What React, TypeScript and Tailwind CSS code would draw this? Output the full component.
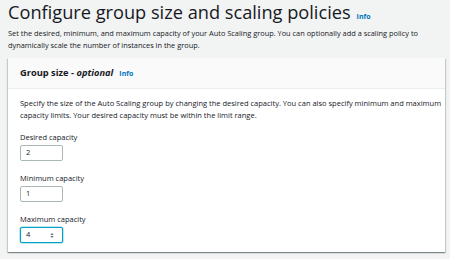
import React from 'react';

const Info = () => (
  <span className="ml-[6px] text-[7px] leading-none font-bold text-[#0073bb]">Info</span>
);

interface FieldProps {
  label: string;
  value: string;
  focused?: boolean;
}

const Field = ({ label, value, focused = false }: FieldProps) => (
  <div className="flex flex-col">
    <label className="text-[7.5px] leading-[10px] text-[#16191f]">{label}</label>
    <div
      className={`mt-[3px] flex h-[16px] w-[43px] items-center justify-between rounded-[2px] bg-white pl-[5px] pr-[8px] text-[7.5px] text-[#16191f] ${focused ? 'border border-[#00a1c9] shadow-[0_0_0_0.5px_rgba(0,161,201,0.5)]' : 'border border-[#aab7b8]'}`}
    >
      <span>{value}</span>
      {focused && (
        <svg width="4" height="7" viewBox="0 0 4 7" className="text-[#687078]">
          <path d="M0.3 3 L2 1 L3.7 3 Z M0.3 4 L2 6 L3.7 4 Z" fill="currentColor" />
        </svg>
      )}
    </div>
  </div>
);

export default function App() {
  return (
    <div
      className="h-[259px] w-[450px] overflow-hidden bg-[#f2f3f3] px-[8px] pt-[2px] text-[#16191f]"
      style={{ fontFamily: '"Open Sans", "Noto Sans", sans-serif' }}
    >
      <h1 className="text-[18.2px] leading-[20px] font-normal">
        Configure group size and scaling policies
        <Info />
      </h1>
      <p className="mt-[5px] text-[7.4px] leading-[12px]">
        Set the desired, minimum, and maximum capacity of your Auto Scaling group. You can optionally add a scaling policy to
        dynamically scale the number of instances in the group.
      </p>
      <div className="mt-[7px] mr-[-3px] bg-white shadow-[0_1px_1px_0_rgba(0,28,36,0.3),1px_1px_1px_0_rgba(0,28,36,0.15),-1px_1px_1px_0_rgba(0,28,36,0.15)]">
        <div className="flex h-[31px] items-center border-b border-[#eaeded] bg-[#fafafa] px-[12px]">
          <span className="text-[9.3px] font-bold">
            Group size - <i>optional</i>
          </span>
          <Info />
        </div>
        <div className="flex flex-col gap-[11px] pt-[9px] pb-[9px] pl-[12px] pr-[2px]">
          <p className="text-[7.5px] leading-[11.5px]">
            Specify the size of the Auto Scaling group by changing the desired capacity. You can also specify minimum and maximum
            capacity limits. Your desired capacity must be within the limit range.
          </p>
          <div className="flex flex-col gap-[12px]">
            <Field label="Desired capacity" value="2" />
            <Field label="Minimum capacity" value="1" />
            <Field label="Maximum capacity" value="4" focused />
          </div>
        </div>
      </div>
    </div>
  );
}
